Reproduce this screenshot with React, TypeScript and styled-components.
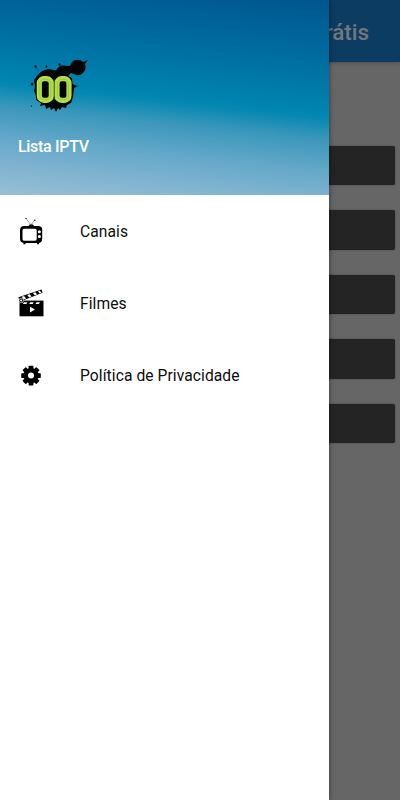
import React from "react";
import styled, { createGlobalStyle } from "styled-components";

const GlobalStyle = createGlobalStyle`
  * { box-sizing: border-box; }
  body { margin: 0; background: #666; font-family: Roboto, sans-serif; }
`;

const Screen = styled.div`
  position: relative;
  height: 800px;
  overflow: hidden;
  background: #666666;
`;

const AppBar = styled.header`
  display: flex;
  align-items: center;
  justify-content: flex-end;
  height: 62px;
  padding: 2px 31px 0 0;
  background: #0d3c63;
  box-shadow: 0 1px 3px rgba(0, 0, 0, 0.25);
`;

const AppTitle = styled.h1`
  margin: 0;
  font-size: 22.4px;
  line-height: 28px;
  font-weight: 500;
  color: #73777b;
`;

const ButtonList = styled.main`
  display: flex;
  flex-direction: column;
  gap: 25px;
  padding: 84px 5px 0;
`;

const DarkButton = styled.button`
  height: 39.4px;
  border: 0;
  border-radius: 2px;
  background: #242424;
  box-shadow: 0 0 2px rgba(0, 0, 0, 0.4);
`;

const Drawer = styled.aside`
  position: absolute;
  top: 0;
  left: 0;
  bottom: 0;
  width: 329px;
  background: #fff;
  box-shadow: 0 0 5px rgba(0, 0, 0, 0.5);
`;

const DrawerHeader = styled.div`
  display: flex;
  flex-direction: column;
  height: 195.4px;
  padding: 57px 18px 0;
  background: linear-gradient(186deg, #00568f 0%, #006ca0 26%, #0084b0 49%, #0688b2 52%, #3a97bb 61%, #64a8c9 75%, #7fb3d0 87%, #98bfd5 100%);
`;

const DrawerTitle = styled.div`
  margin-top: 22px;
  font-size: 16px;
  line-height: 22px;
  font-weight: 500;
  letter-spacing: -0.3px;
  color: #fff;
`;

const Menu = styled.nav`
  display: flex;
  flex-direction: column;
`;

const MenuItem = styled.a`
  display: flex;
  align-items: center;
  gap: 35px;
  height: 72px;
  padding-left: 18px;
`;

const MenuLabel = styled.span`
  padding-top: 2px;
  font-size: 15.6px;
  letter-spacing: 0.08px;
  color: #0c0c0c;
`;

const Logo = () => (
  <svg width="72" height="57" viewBox="18 57 72 57">
    <g fill="#020504">
      <path d="M37 76Q41 70 49 69L56 70.5Q59 65.5 63 65.5L69 66Q71 65 72 62Q75 59 80 60L83 62L88 60L85 64Q87 69 83 73Q79 77 74 74L71 73L68 76L72 78L72.5 84L78 86L74 88L73 97L71 103L67 105L66 108L62 107L60 110L58 108L56 112L54 108L51 110L50 107L46 109L45 105L40 106L41 103L36 100L36 96L34 91L35 86L34 80Z" />
      <circle cx="35.5" cy="66.5" r="1.2" />
      <circle cx="46.5" cy="66.5" r="1" />
      <circle cx="59.5" cy="64.5" r="1.2" />
      <circle cx="32" cy="84" r="1.5" />
      <circle cx="31.5" cy="106" r="0.6" />
      <path d="M35 66L39 71" stroke="#0c3b4b" strokeWidth="0.6" />
    </g>
    <g fill="none" stroke="#b4de4a" strokeWidth="5.2">
      <rect x="39.3" y="78.7" width="12" height="21.6" rx="4.6" />
      <rect x="57" y="78.7" width="12" height="21.6" rx="4.6" />
    </g>
    <g fill="none" stroke="#8db33b" strokeWidth="0.6">
      <rect x="39.8" y="79.2" width="11" height="20.6" rx="4.2" />
      <rect x="57.5" y="79.2" width="11" height="20.6" rx="4.2" />
      <path d="M54.2 79V100" stroke="#4d6c23" />
    </g>
  </svg>
);

const TvIcon = () => (
  <svg width="27" height="30" viewBox="18 216 27 30">
    <path d="M26 218.5L31 225L34.6 220" fill="none" stroke="#777" strokeWidth="0.7" />
    <circle cx="26" cy="218.4" r="0.6" />
    <circle cx="34.8" cy="220.3" r="0.7" />
    <path fillRule="evenodd" d="M28.5 226L29.5 224.5H33L34 226H38.5Q42 226 42.2 229.5V239Q42 242.5 39 243V244.3H37V243H25.5V244.3H23.5V243Q20.2 242.5 20 239V230Q20.3 226 24 226ZM24 228.8Q22.5 228.8 22.5 230.5V239Q22.5 240.8 24 240.8H35Q36.7 240.8 36.7 239V230.5Q36.7 228.8 35 228.8Z" />
    <g fill="#fff">
      <circle cx="39.4" cy="231.8" r="1.5" />
      <circle cx="39.4" cy="236.6" r="1.5" />
    </g>
  </svg>
);

const ClapperIcon = () => (
  <svg width="27" height="30" viewBox="18 288 27 30">
    <path d="M18.5 297.2L41.5 289.6L42.6 292.8L21 301.2L19.5 301Z" />
    <path d="M19.5 300.6H43.5V316.3H19.5Z" />
    <path fill="#fff" d="M21.7 296.7L24 296L26.2 298.6L23.6 299.5ZM27.3 295L29.6 294.2L31.6 296.6L29.2 297.4ZM32.9 293L35.2 292.3L37.2 294.4L34.8 295.3ZM38 291.3L39.8 290.8L41.6 292.7L39.7 293.4Z" />
    <path fill="#fff" d="M24 302.2H27.5L26.3 304H22.8ZM30.3 302.2H33.8L32.6 304H29.1ZM36.6 302.2H40L38.8 304H35.4ZM30 306.8V312.5L35 309.6Z" />
    <circle cx="21.2" cy="300.5" r="2.3" fill="#111" stroke="#fff" strokeWidth="0.6" />
    <circle cx="21.2" cy="300.5" r="1" fill="#fff" />
  </svg>
);

const GearIcon = () => (
  <svg width="27" height="30" viewBox="-13 -15.6 27 30">
    {[0, 45, 90, 135].map((angle) => (
      <rect key={angle} x="-2.4" y="-9.8" width="4.8" height="19.6" rx="0.7" transform={`rotate(${angle})`} />
    ))}
    <circle r="7.7" />
    <circle r="3" fill="#fff" />
  </svg>
);

const items = [
  { label: "Canais", Icon: TvIcon },
  { label: "Filmes", Icon: ClapperIcon },
  { label: "Política de Privacidade", Icon: GearIcon },
];

export default function App() {
  return (
    <Screen>
      <GlobalStyle />
      <AppBar>
        <AppTitle>Grátis</AppTitle>
      </AppBar>
      <ButtonList>
        {[0, 1, 2, 3, 4].map((n) => (
          <DarkButton key={n} />
        ))}
      </ButtonList>
      <Drawer>
        <DrawerHeader>
          <Logo />
          <DrawerTitle>Lista IPTV</DrawerTitle>
        </DrawerHeader>
        <Menu>
          {items.map(({ label, Icon }) => (
            <MenuItem key={label}>
              <Icon />
              <MenuLabel>{label}</MenuLabel>
            </MenuItem>
          ))}
        </Menu>
      </Drawer>
    </Screen>
  );
}
